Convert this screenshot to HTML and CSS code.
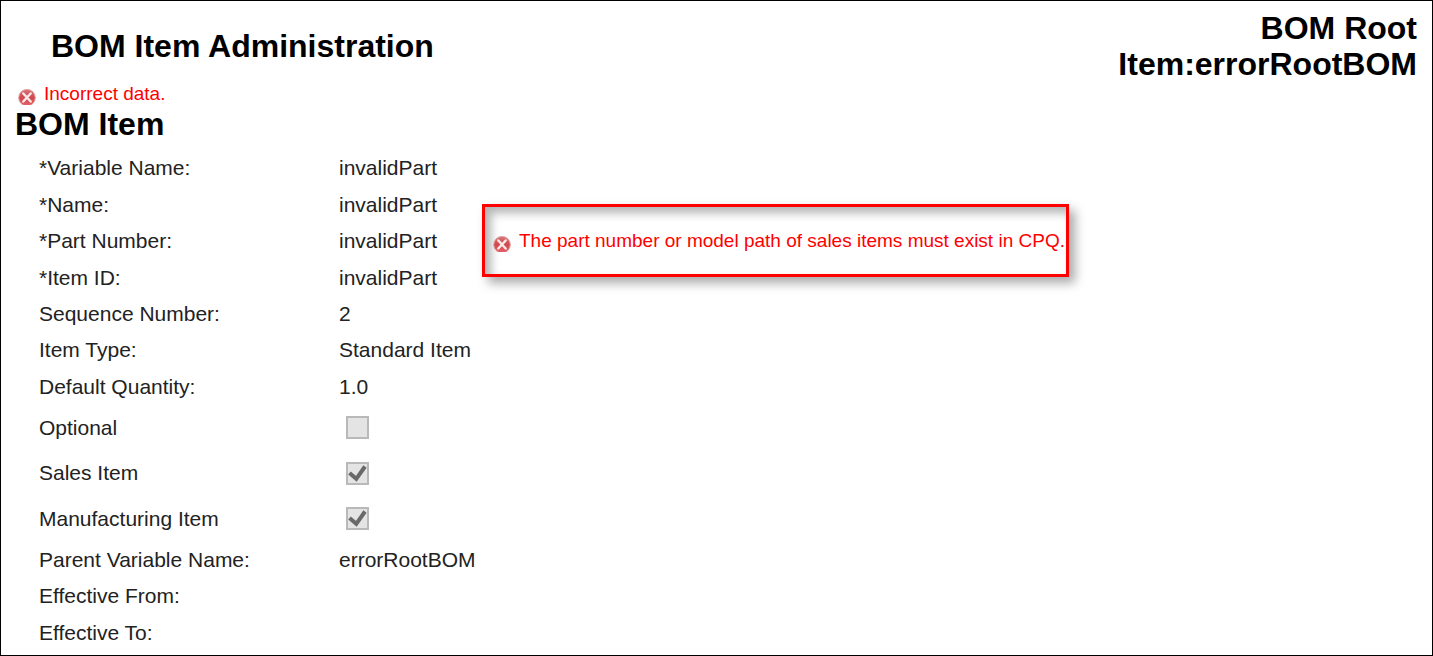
FILE: index.html
```html
<!DOCTYPE html>
<html lang="en">
<head>
<meta charset="utf-8">
<title>BOM Item Administration</title>
<link rel="stylesheet" href="styles.css">
</head>
<body>
<svg class="symbols" aria-hidden="true">
  <defs>
    <linearGradient id="red" x1="0" y1="0" x2="0" y2="1">
      <stop offset="0" stop-color="#d9767a"/>
      <stop offset="0.5" stop-color="#d2474d"/>
      <stop offset="1" stop-color="#e8636a"/>
    </linearGradient>
  </defs>
  <symbol id="error" viewBox="0 0 18 16">
    <circle cx="9" cy="8.700" r="8.300" fill="url(#red)" stroke="#dfa3a3" stroke-width="1"/>
    <path d="M5.300 4.500l7.400 8M12.700 4.500l-7.400 8" stroke="#fbeaea" stroke-width="2.400" stroke-linecap="round"/>
  </symbol>
</svg>
<main class="page">
  <header class="header">
    <h1 class="title">BOM Item Administration</h1>
    <p class="root">BOM Root<br>Item:errorRootBOM</p>
  </header>
  <p class="error"><svg class="error-icon" aria-hidden="true"><use href="#error"/></svg>Incorrect data.</p>
  <h2 class="section">BOM Item</h2>
  <dl class="fields">
    <div class="field"><dt>*Variable Name:</dt><dd>invalidPart</dd></div>
    <div class="field"><dt>*Name:</dt><dd>invalidPart</dd></div>
    <div class="field"><dt>*Part Number:</dt><dd class="anchor">invalidPart
      <p class="error callout"><svg class="error-icon" aria-hidden="true"><use href="#error"/></svg>The part number or model path of sales items must exist in CPQ.</p></dd></div>
    <div class="field"><dt>*Item ID:</dt><dd>invalidPart</dd></div>
    <div class="field"><dt>Sequence Number:</dt><dd>2</dd></div>
    <div class="field"><dt>Item Type:</dt><dd>Standard Item</dd></div>
    <div class="field"><dt>Default Quantity:</dt><dd>1.0</dd></div>
    <div class="field check-row"><dt><label for="optional">Optional</label></dt><dd><input class="check" id="optional" type="checkbox" disabled></dd></div>
    <div class="field check-row"><dt><label for="sales">Sales Item</label></dt><dd class="checked"><input class="check" id="sales" type="checkbox" checked disabled><svg class="tick" viewBox="0 0 23 23" aria-hidden="true"><path d="M3.500 11l6.800 5.800L19 4.500"/></svg></dd></div>
    <div class="field check-row"><dt><label for="manufacturing">Manufacturing Item</label></dt><dd class="checked"><input class="check" id="manufacturing" type="checkbox" checked disabled><svg class="tick" viewBox="0 0 23 23" aria-hidden="true"><path d="M3.500 11l6.800 5.800L19 4.500"/></svg></dd></div>
    <div class="field"><dt>Parent Variable Name:</dt><dd>errorRootBOM</dd></div>
    <div class="field"><dt>Effective From:</dt><dd></dd></div>
    <div class="field"><dt>Effective To:</dt><dd></dd></div>
  </dl>
</main>
</body>
</html>
```
FILE: styles.css
```css
* { box-sizing: border-box; }
body, h1, h2, p, dl, dd { margin: 0; }
body { background: #fff; color: #222; font: 21px/24px "Liberation Sans", Arial, sans-serif; }
.symbols { position: absolute; width: 0; height: 0; }
.page { display: flex; flex-direction: column; min-height: 100vh; border: 1px solid #000; padding: 9px 15px 4px 14px; }
.header { display: flex; justify-content: space-between; align-items: center; padding-left: 36px; }
.title, .root, .section { font-size: 32px; line-height: 36px; font-weight: bold; color: #000; }
.root { text-align: right; }
.error { display: flex; align-items: center; gap: 8px; color: #f00; font-size: 19px; }
.error-icon { flex: none; width: 18px; height: 16px; margin-top: 6px; }
.page > .error { padding-left: 3px; }
.fields { flex: 1; display: grid; align-content: stretch; padding: 8px 24px 0; }
.field { display: grid; grid-template-columns: 300px 1fr; align-items: center; min-height: 36px; }
.check-row { min-height: 45px; }
.anchor { position: relative; }
.callout { position: absolute; left: 143px; top: -25px; width: 587px; height: 73px; padding: 0 0 0 8px; border: 3px solid #f00; box-shadow: 6px 6px 10px #aaa, inset 6px 6px 10px #b4b4b4; white-space: nowrap; }
.check { appearance: none; display: block; width: 23px; height: 23px; margin: 0 0 0 7px; border: 2px solid #b9b9b9; background: #e4e4e4; }
.checked { position: relative; }
.tick { position: absolute; left: 7px; top: 0; width: 23px; height: 23px; fill: none; stroke: #696969; stroke-width: 4; }
```
